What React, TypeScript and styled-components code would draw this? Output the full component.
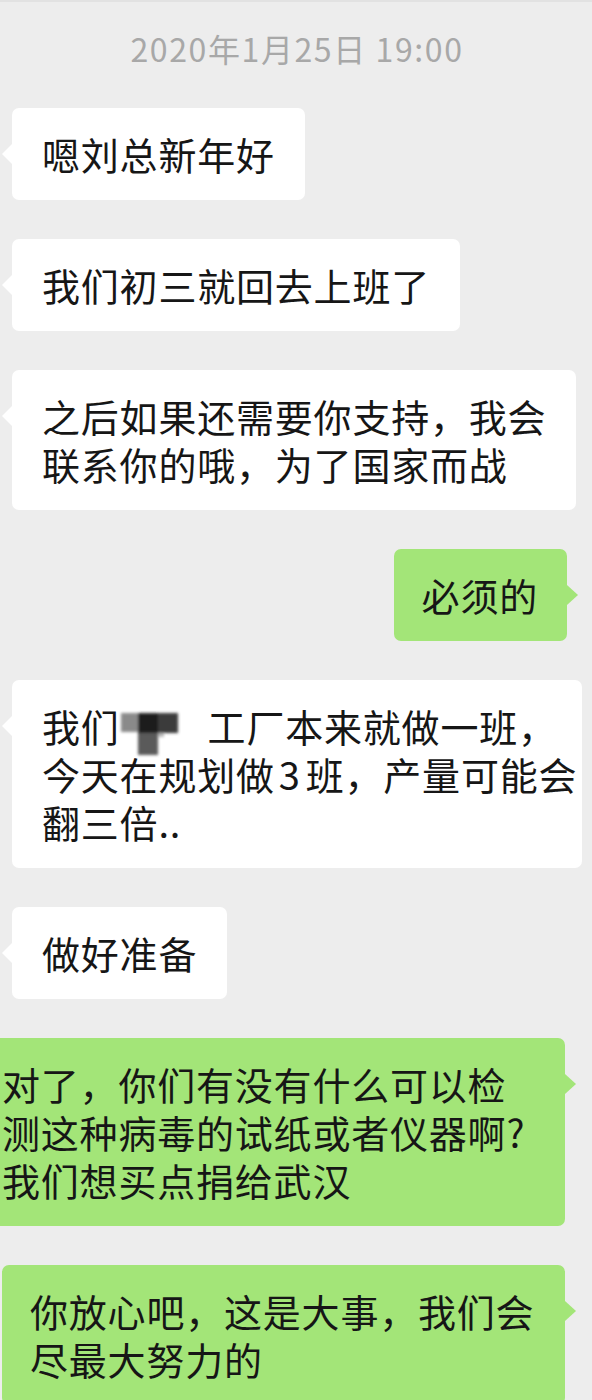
import React from "react";
import styled, { createGlobalStyle } from "styled-components";

const Global = createGlobalStyle`
  html, body {
    margin: 0;
    padding: 0;
    background: #ededed;
  }
  body {
    font-family: "Noto Sans CJK SC", "Noto Sans", sans-serif;
    overflow: hidden;
  }
`;

const Chat = styled.div`
  display: flex;
  flex-direction: column;
  gap: 39px;
  padding-top: 25px;
  border-top: 2px solid #e2e2e2;
  background: #ededed;
  min-height: 1400px;
  box-sizing: border-box;
`;

const Timestamp = styled.div`
  text-align: center;
  font-size: 32px;
  line-height: 42px;
  color: #a8a8a8;
  letter-spacing: 1.6px;
  padding-left: 2px;
`;

const Row = styled.div<{ $side: "left" | "right"; $inset: number }>`
  display: flex;
  justify-content: ${(p) => (p.$side === "left" ? "flex-start" : "flex-end")};
  padding-left: ${(p) => (p.$side === "left" ? p.$inset : 0)}px;
  padding-right: ${(p) => (p.$side === "right" ? p.$inset : 0)}px;
`;

const Bubble = styled.div<{
  $side: "left" | "right";
  $pad?: string;
  $w?: number;
  $square?: boolean;
}>`
  position: relative;
  box-sizing: border-box;
  ${(p) => (p.$w ? `width: ${p.$w}px;` : "")}
  padding: ${(p) => p.$pad ?? "22px 30px"};
  background: ${(p) => (p.$side === "left" ? "#ffffff" : "#a3e578")};
  border-radius: ${(p) => (p.$square ? "0 7px 7px 0" : "7px")};
  font-size: 38px;
  line-height: 48px;
  letter-spacing: 0.8px;
  color: #161616;
  white-space: nowrap;

  &::before {
    content: "";
    position: absolute;
    top: 36px;
    width: 0;
    height: 0;
    border-top: 10px solid transparent;
    border-bottom: 10px solid transparent;
    ${(p) =>
      p.$side === "left"
        ? "left: -10px; border-right: 10px solid #ffffff;"
        : "right: -11px; border-left: 11px solid #a3e578;"}
  }
`;

const Num = styled.span`
  margin: 0 5px 0 4px;
`;

const Redaction = styled.svg`
  display: inline-block;
  vertical-align: top;
  width: 88px;
  height: 48px;
  overflow: visible;
`;

const Blur = () => (
  <Redaction viewBox="0 0 88 48">
    <defs>
      <filter id="rb" x="-20%" y="-20%" width="140%" height="140%">
        <feGaussianBlur stdDeviation="1.4" />
      </filter>
    </defs>
    <g filter="url(#rb)">
      <rect x="1" y="11" width="17" height="19" fill="#8a8a8a" />
      <rect x="18" y="11" width="20" height="20" fill="#1c1c1c" />
      <rect x="38" y="11" width="20" height="20" fill="#3a3a3a" />
      <rect x="18" y="31" width="20" height="22" fill="#5a5a5a" />
      <rect x="38" y="31" width="6" height="4" fill="#b8b8b8" />
    </g>
  </Redaction>
);

export default function App() {
  return (
    <>
      <Global />
      <Chat>
        <Timestamp>2020年1月25日 19:00</Timestamp>

        <Row $side="left" $inset={12}>
          <Bubble $side="left">嗯刘总新年好</Bubble>
        </Row>

        <Row $side="left" $inset={12}>
          <Bubble $side="left">我们初三就回去上班了</Bubble>
        </Row>

        <Row $side="left" $inset={12}>
          <Bubble $side="left">
            之后如果还需要你支持，我会
            <br />
            联系你的哦，为了国家而战
          </Bubble>
        </Row>

        <Row $side="right" $inset={25}>
          <Bubble $side="right" $pad="22px 29px 22px 28px">
            必须的
          </Bubble>
        </Row>

        <Row $side="left" $inset={12}>
          <Bubble $side="left" $pad="22px 5px 22px 30px">
            我们
            <Blur />
            工厂本来就做一班，
            <br />
            今天在规划做<Num>3</Num>班，产量可能会
            <br />
            翻三倍..
          </Bubble>
        </Row>

        <Row $side="left" $inset={12}>
          <Bubble $side="left">做好准备</Bubble>
        </Row>

        <Row $side="right" $inset={27}>
          <Bubble $side="right" $w={565} $square $pad="22px 20px 22px 2px">
            对了，你们有没有什么可以检
            <br />
            测这种病毒的试纸或者仪器啊?
            <br />
            我们想买点捐给武汉
          </Bubble>
        </Row>

        <Row $side="right" $inset={27}>
          <Bubble $side="right" $w={563} $pad="22px 20px 22px 28px">
            你放心吧，这是大事，我们会
            <br />
            尽最大努力的
          </Bubble>
        </Row>
      </Chat>
    </>
  );
}
